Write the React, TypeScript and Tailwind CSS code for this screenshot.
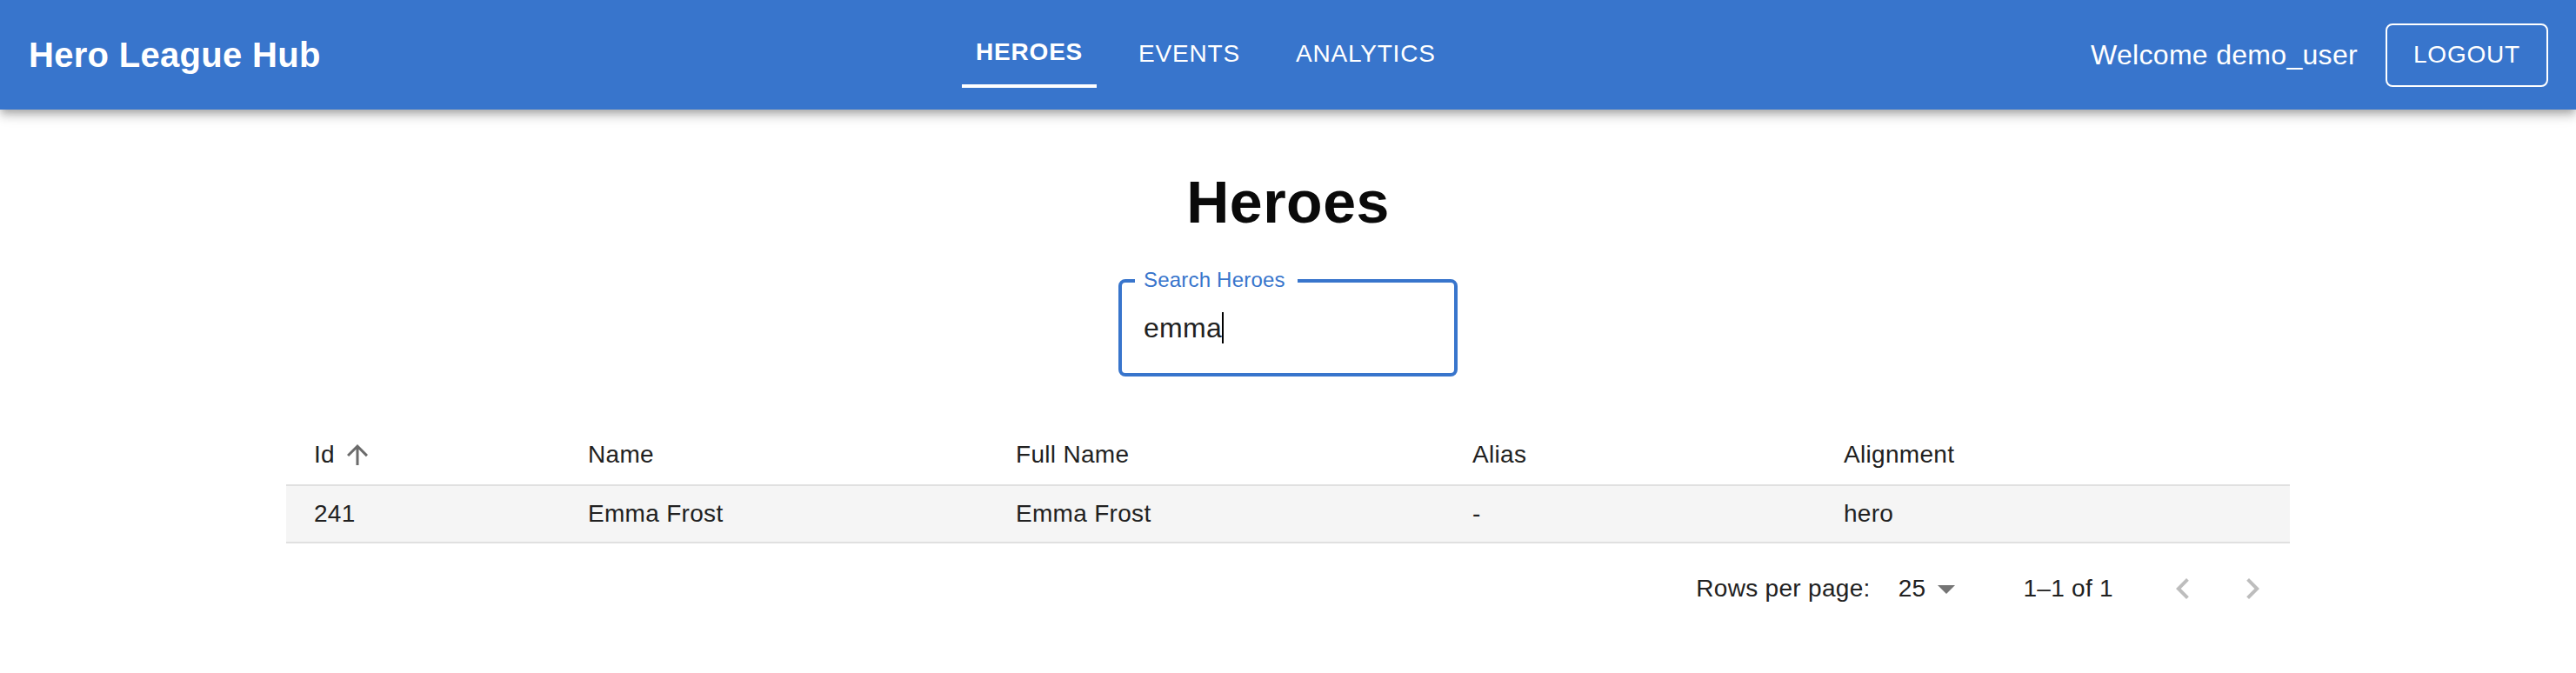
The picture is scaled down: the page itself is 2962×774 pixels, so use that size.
import React from "react";

const tabs = [
  { label: "HEROES", active: true },
  { label: "EVENTS", active: false },
  { label: "ANALYTICS", active: false },
];

const columns = ["Name", "Full Name", "Alias", "Alignment"];
const row = ["241", "Emma Frost", "Emma Frost", "-", "hero"];

export default function App() {
  return (
    <div className="min-h-screen bg-white font-['Liberation_Sans',Arial,sans-serif] text-[#212121]">
      <header className="relative z-10 flex h-[126px] items-center bg-[#3875cc] px-[32px] text-white shadow-[0_4px_8px_-2px_rgba(0,0,0,0.2),0_8px_10px_0_rgba(0,0,0,0.14),0_2px_20px_0_rgba(0,0,0,0.12)]">
        <div className="pl-[1px] text-[40px] font-bold leading-[48px] tracking-[0.3px]">Hero League Hub</div>
        <nav className="flex flex-1 justify-center gap-[32px] self-start">
          {tabs.map((t) => (
            <div
              key={t.label}
              className={
                t.active
                  ? "flex h-[101px] items-end border-b-4 border-white px-[16px] pb-[21px] text-[28px] font-bold leading-[32px] tracking-[0.8px]"
                  : "flex h-[101px] items-end border-b-4 border-transparent px-[16px] pb-[19px] text-[28px] leading-[32px] tracking-[0.8px]"
              }
            >
              {t.label}
            </div>
          ))}
        </nav>
        <div className="flex items-center gap-[32px]">
          <span className="text-[32px] leading-[40px] tracking-[0.3px]">Welcome demo_user</span>
          <button className="flex h-[73px] items-center rounded-[8px] border-2 border-white px-[30px] text-[28px] leading-[32px] tracking-[0.8px] text-white">
            LOGOUT
          </button>
        </div>
      </header>

      <main className="mx-auto w-[2304px]">
        <h1 className="mt-[64px] text-center text-[68px] font-bold leading-[84px] tracking-[0.5px] text-[#0a0a0a]">Heroes</h1>

        <div className="mt-[47px] flex justify-center">
          <div className="relative h-[112px] w-[390px] rounded-[8px] border-4 border-[#3875cc]">
            <span className="absolute left-[15px] top-[-17px] bg-white pl-[10px] pr-[14px] text-[24px] leading-[28px] tracking-[0.2px] text-[#3875cc]">
              Search Heroes
            </span>
            <div className="flex h-full items-center pl-[25px] text-[32px] leading-[40px] tracking-[0.3px] text-[#212121]">
              <span>emma</span>
              <span className="h-[36px] w-[2px] bg-black" />
            </div>
          </div>
        </div>

        <div className="mt-[56px] text-[28px] leading-[40px] tracking-[0.3px]">
          <div className="grid h-[70px] grid-cols-[315px_492px_525px_427px_1fr] items-center border-b-2 border-[#e0e0e0]">
            <div className="flex items-center pl-[32px]">
              <span>Id</span>
              <svg className="ml-[8px] h-[36px] w-[36px]" viewBox="0 0 24 24" fill="#6b6b6b">
                <path d="M4 12l1.41 1.41L11 7.83V20h2V7.83l5.58 5.59L20 12l-8-8-8 8z" />
              </svg>
            </div>
            {columns.map((c) => (
              <div key={c} className="pl-[32px]">
                {c}
              </div>
            ))}
          </div>
          <div className="grid h-[66px] grid-cols-[315px_492px_525px_427px_1fr] items-center border-b-2 border-[#e0e0e0] bg-[#f5f5f5]">
            {row.map((v, i) => (
              <div key={i} className="pl-[32px]">
                {v}
              </div>
            ))}
          </div>

          <div className="flex h-[104px] items-center justify-end pr-[3px]">
            <span>Rows per page:</span>
            <div className="ml-[16px] mr-[64px] flex items-center pl-[16px]">
              <span>25</span>
              <svg className="h-[48px] w-[48px]" viewBox="0 0 24 24" fill="#757575">
                <path d="M7 10l5 5 5-5z" />
              </svg>
            </div>
            <span>1–1 of 1</span>
            <div className="ml-[40px] flex">
              <div className="flex h-[80px] w-[80px] items-center justify-center">
                <svg className="h-[48px] w-[48px]" viewBox="0 0 24 24" fill="#bdbdbd">
                  <path d="M15.41 16.59 10.83 12l4.58-4.59L14 6l-6 6 6 6z" />
                </svg>
              </div>
              <div className="flex h-[80px] w-[80px] items-center justify-center">
                <svg className="h-[48px] w-[48px]" viewBox="0 0 24 24" fill="#bdbdbd">
                  <path d="M8.59 16.59 13.17 12 8.59 7.41 10 6l6 6-6 6z" />
                </svg>
              </div>
            </div>
          </div>
        </div>
      </main>
    </div>
  );
}
